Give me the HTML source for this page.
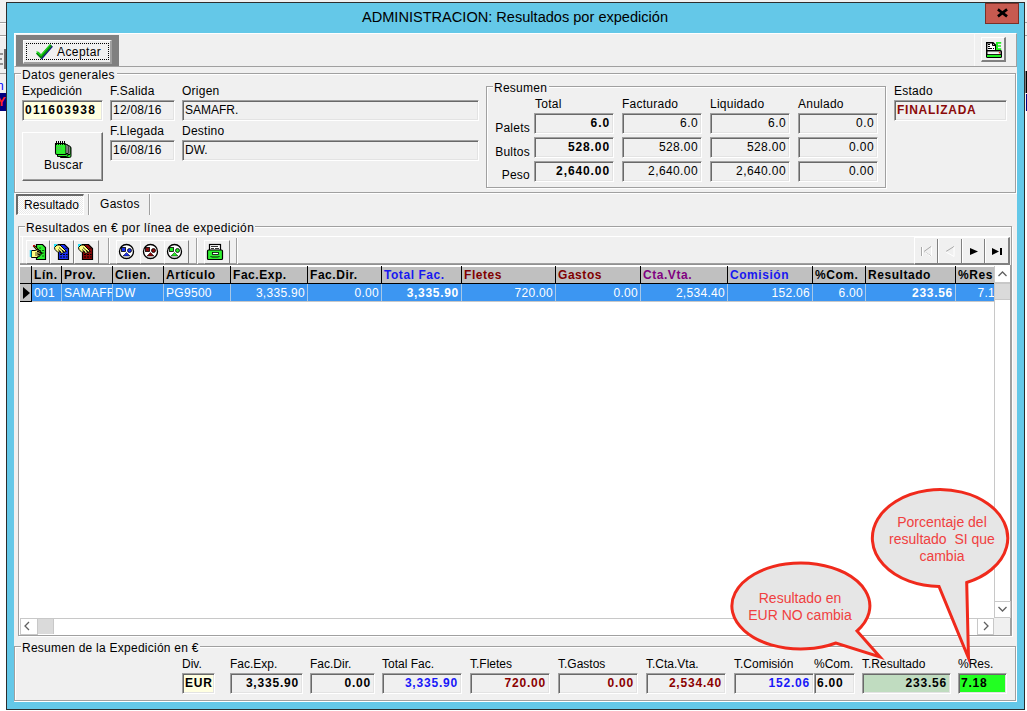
<!DOCTYPE html><html><head><meta charset="utf-8"><style>
html,body{margin:0;padding:0;}
body{width:1027px;height:711px;position:relative;overflow:hidden;background:#fff;font-family:"Liberation Sans",sans-serif;}
div{position:absolute;box-sizing:content-box;}
.t{white-space:pre;}
.sk{border-top:1px solid #a0a0a0;border-left:1px solid #a0a0a0;border-bottom:1px solid #fff;border-right:1px solid #fff;box-shadow:inset 1px 1px 0 #696969, inset -1px -1px 0 #e3e3e3;}
.rs{border-top:1px solid #fff;border-left:1px solid #fff;border-bottom:1px solid #696969;border-right:1px solid #696969;box-shadow:inset -1px -1px 0 #a0a0a0, inset 1px 1px 0 #f0f0f0;}
.tb{border-top:1px solid #fff;border-left:1px solid #fff;border-bottom:1px solid #a0a0a0;border-right:1px solid #a0a0a0;}
svg{position:absolute;}
</style></head><body>
<div style="left:0px;top:0px;width:1027px;height:2px;background:#f0f0f0"></div>
<div style="left:0px;top:0px;width:6px;height:111px;background:#f0f0f0"></div>
<div style="left:1025px;top:0px;width:2px;height:111px;background:#f0f0f0"></div>
<div style="left:0px;top:22px;width:6px;height:1px;background:#a0a0a0"></div>
<div style="left:0px;top:23px;width:6px;height:1px;background:#fff"></div>
<div style="left:0px;top:35px;width:6px;height:1px;background:#a0a0a0"></div>
<div style="left:0px;top:36px;width:6px;height:1px;background:#fff"></div>
<div style="left:0px;top:49px;width:4px;height:20px;background:#ececec;border-right:2px solid #6a6a6a"></div>
<div style="left:0px;top:53px;width:3px;height:2px;background:#909090"></div>
<div style="left:0px;top:58px;width:2px;height:2px;background:#909090"></div>
<div style="left:0px;top:63px;width:3px;height:2px;background:#909090"></div>
<div style="left:0px;top:73px;width:6px;height:1px;background:#a0a0a0"></div>
<div class="t" style="left:-3px;top:79px;font-size:12px;color:#0000ff">n</div>
<div style="left:0px;top:93px;width:6px;height:18px;background:#000080"></div>
<div class="t" style="left:-3px;top:94px;font-size:13px;font-weight:700;color:#ff2020">Y</div>
<div style="left:1025px;top:22px;width:2px;height:1px;background:#a0a0a0"></div>
<div style="left:1025px;top:35px;width:2px;height:1px;background:#a0a0a0"></div>
<div style="left:1025px;top:71px;width:1px;height:22px;background:#808080"></div>
<div style="left:1026px;top:71px;width:1px;height:22px;background:#000"></div>
<div style="left:1026px;top:94px;width:1px;height:17px;background:#000080"></div>
<div style="left:6px;top:2px;width:1017px;height:706px;border:1px solid #2d2d2d;background:#64c8e8"></div>
<div class="t" style="left:0;width:1030px;text-align:center;top:8px;font-size:15.5px;line-height:18px;color:#000;transform:scaleX(0.94);transform-origin:515px 0">ADMINISTRACION: Resultados por expedición</div>
<div style="left:985px;top:3px;width:32px;height:19px;background:#c75a50;border:1px solid #7a3028"></div>
<svg style="left:0;top:0" width="1027" height="30" viewBox="0 0 1027 30"><path d="M999 10.2 L1006 15.6 M1006 10.2 L999 15.6" stroke="#000" stroke-width="2.7" stroke-linecap="square"/></svg>
<div style="left:14px;top:33px;width:1003px;height:669px;background:#f0f0f0"></div>
<div style="left:14px;top:33px;width:1002px;height:33px;border-top:1px solid #fff;border-left:1px solid #fff;border-right:1px solid #a0a0a0;border-bottom:1px solid #a0a0a0;width:1001px;height:32px"></div>
<div style="left:16px;top:35px;width:103px;height:31px;background:#808080"></div>
<div style="left:23px;top:40px;width:86px;height:21px;background:#f0f0f0;border-top:1px solid #fff;border-left:1px solid #fff;border-bottom:2px solid #a0a0a0;border-right:2px solid #a0a0a0"></div>
<div style="left:26px;top:43px;width:81px;height:15px;border:1px dotted #000"></div>
<svg style="left:0;top:0" width="1027" height="711" viewBox="0 0 1027 711"><path d="M37.8 53.2 L41.8 57.2 L51.8 45.8" fill="none" stroke="#0a0a90" stroke-width="3"/><path d="M37 52.5 L41 56.5 L51 45.2" fill="none" stroke="#0c8a0c" stroke-width="3"/><path d="M36.6 51.5 L41 55.3 L50.3 44.5" fill="none" stroke="#22ee22" stroke-width="1.1"/></svg>
<div class="t" style="left:57px;top:45px;font-size:12px;line-height:14px;color:#000;font-weight:400;letter-spacing:0.4px;">Aceptar</div>
<div style="left:974px;top:34px;width:1px;height:32px;background:#fafafa"></div>
<div style="left:981px;top:37px;width:22px;height:22px;background:#f0f0f0;border-top:1px solid #fff;border-left:1px solid #fff;border-bottom:2px solid #808080;border-right:2px solid #808080"></div>
<div style="left:15px;top:74px;width:1000px;height:118px;border:1px solid #fff"></div>
<div style="left:14px;top:73px;width:1000px;height:118px;border:1px solid #a0a0a0"></div>
<div style="left:21px;top:71px;width:96px;height:6px;background:#f0f0f0"></div>
<div class="t" style="left:22px;top:68px;font-size:12px;line-height:14px;color:#000;font-weight:400;letter-spacing:0.37px;">Datos generales</div>
<div class="t" style="left:22px;top:84px;font-size:12px;line-height:14px;color:#000;font-weight:400;letter-spacing:0.13px;">Expedición</div>
<div class="t" style="left:110px;top:84px;font-size:12px;line-height:14px;color:#000;font-weight:400;letter-spacing:0.25px;">F.Salida</div>
<div class="t" style="left:182px;top:84px;font-size:12px;line-height:14px;color:#000;font-weight:400;letter-spacing:0.25px;">Origen</div>
<div class="t" style="left:110px;top:124px;font-size:12px;line-height:14px;color:#000;font-weight:400;letter-spacing:0.25px;">F.Llegada</div>
<div class="t" style="left:182px;top:124px;font-size:12px;line-height:14px;color:#000;font-weight:400;letter-spacing:0.25px;">Destino</div>
<div class="sk" style="left:22px;top:100px;width:79px;height:19px;background:#ffffe1"></div>
<div class="t" style="left:25px;top:103px;font-size:12px;line-height:14px;color:#000;font-weight:700;letter-spacing:1.3px;">011603938</div>
<div class="sk" style="left:110px;top:100px;width:63px;height:19px;background:#f0f0f0"></div>
<div class="t" style="left:113px;top:103px;font-size:12px;line-height:14px;color:#000;font-weight:400;letter-spacing:0.25px;">12/08/16</div>
<div class="sk" style="left:182px;top:100px;width:295px;height:19px;background:#f0f0f0"></div>
<div class="t" style="left:185px;top:103px;font-size:12px;line-height:14px;color:#000;font-weight:400;letter-spacing:0px;">SAMAFR.</div>
<div class="sk" style="left:110px;top:140px;width:63px;height:19px;background:#f0f0f0"></div>
<div class="t" style="left:113px;top:143px;font-size:12px;line-height:14px;color:#000;font-weight:400;letter-spacing:0.25px;">16/08/16</div>
<div class="sk" style="left:182px;top:140px;width:295px;height:19px;background:#f0f0f0"></div>
<div class="t" style="left:185px;top:143px;font-size:12px;line-height:14px;color:#000;font-weight:400;letter-spacing:0px;">DW.</div>
<div class="rs" style="left:22px;top:132px;width:79px;height:47px;background:#f0f0f0"></div>
<div class="t" style="left:44px;top:158px;font-size:12px;line-height:14px;color:#000;font-weight:400;letter-spacing:0.3px;">Buscar</div>
<div style="left:487px;top:87px;width:398px;height:100px;border:1px solid #fff"></div>
<div style="left:486px;top:86px;width:398px;height:100px;border:1px solid #a0a0a0"></div>
<div style="left:493px;top:84px;width:56px;height:6px;background:#f0f0f0"></div>
<div class="t" style="left:494px;top:81px;font-size:12px;line-height:14px;color:#000;font-weight:400;letter-spacing:0.25px;">Resumen</div>
<div class="t" style="left:535px;top:97px;font-size:12px;line-height:14px;color:#000;font-weight:400;letter-spacing:0.25px;">Total</div>
<div class="t" style="left:622px;top:97px;font-size:12px;line-height:14px;color:#000;font-weight:400;letter-spacing:0.25px;">Facturado</div>
<div class="t" style="left:710px;top:97px;font-size:12px;line-height:14px;color:#000;font-weight:400;letter-spacing:0.25px;">Liquidado</div>
<div class="t" style="left:798px;top:97px;font-size:12px;line-height:14px;color:#000;font-weight:400;letter-spacing:0.25px;">Anulado</div>
<div class="t" style="left:230px;width:300px;text-align:right;top:121px;font-size:12px;line-height:14px;color:#000;font-weight:400;letter-spacing:0.25px;">Palets</div>
<div class="t" style="left:230px;width:300px;text-align:right;top:145px;font-size:12px;line-height:14px;color:#000;font-weight:400;letter-spacing:0.25px;">Bultos</div>
<div class="t" style="left:230px;width:300px;text-align:right;top:168px;font-size:12px;line-height:14px;color:#000;font-weight:400;letter-spacing:0.25px;">Peso</div>
<div class="sk" style="left:534px;top:113px;width:78px;height:19px;background:#f0f0f0"></div>
<div class="t" style="left:310px;width:300px;text-align:right;top:116px;font-size:12px;line-height:14px;color:#000;font-weight:700;letter-spacing:0.9px;">6.0</div>
<div class="sk" style="left:622px;top:113px;width:78px;height:19px;background:#f0f0f0"></div>
<div class="t" style="left:398px;width:300px;text-align:right;top:116px;font-size:12px;line-height:14px;color:#000;font-weight:400;letter-spacing:0.4px;">6.0</div>
<div class="sk" style="left:710px;top:113px;width:78px;height:19px;background:#f0f0f0"></div>
<div class="t" style="left:486px;width:300px;text-align:right;top:116px;font-size:12px;line-height:14px;color:#000;font-weight:400;letter-spacing:0.4px;">6.0</div>
<div class="sk" style="left:798px;top:113px;width:78px;height:19px;background:#f0f0f0"></div>
<div class="t" style="left:574px;width:300px;text-align:right;top:116px;font-size:12px;line-height:14px;color:#000;font-weight:400;letter-spacing:0.4px;">0.0</div>
<div class="sk" style="left:534px;top:137px;width:78px;height:19px;background:#f0f0f0"></div>
<div class="t" style="left:310px;width:300px;text-align:right;top:140px;font-size:12px;line-height:14px;color:#000;font-weight:700;letter-spacing:0.9px;">528.00</div>
<div class="sk" style="left:622px;top:137px;width:78px;height:19px;background:#f0f0f0"></div>
<div class="t" style="left:398px;width:300px;text-align:right;top:140px;font-size:12px;line-height:14px;color:#000;font-weight:400;letter-spacing:0.4px;">528.00</div>
<div class="sk" style="left:710px;top:137px;width:78px;height:19px;background:#f0f0f0"></div>
<div class="t" style="left:486px;width:300px;text-align:right;top:140px;font-size:12px;line-height:14px;color:#000;font-weight:400;letter-spacing:0.4px;">528.00</div>
<div class="sk" style="left:798px;top:137px;width:78px;height:19px;background:#f0f0f0"></div>
<div class="t" style="left:574px;width:300px;text-align:right;top:140px;font-size:12px;line-height:14px;color:#000;font-weight:400;letter-spacing:0.4px;">0.00</div>
<div class="sk" style="left:534px;top:161px;width:78px;height:19px;background:#f0f0f0"></div>
<div class="t" style="left:310px;width:300px;text-align:right;top:164px;font-size:12px;line-height:14px;color:#000;font-weight:700;letter-spacing:0.9px;">2,640.00</div>
<div class="sk" style="left:622px;top:161px;width:78px;height:19px;background:#f0f0f0"></div>
<div class="t" style="left:398px;width:300px;text-align:right;top:164px;font-size:12px;line-height:14px;color:#000;font-weight:400;letter-spacing:0.4px;">2,640.00</div>
<div class="sk" style="left:710px;top:161px;width:78px;height:19px;background:#f0f0f0"></div>
<div class="t" style="left:486px;width:300px;text-align:right;top:164px;font-size:12px;line-height:14px;color:#000;font-weight:400;letter-spacing:0.4px;">2,640.00</div>
<div class="sk" style="left:798px;top:161px;width:78px;height:19px;background:#f0f0f0"></div>
<div class="t" style="left:574px;width:300px;text-align:right;top:164px;font-size:12px;line-height:14px;color:#000;font-weight:400;letter-spacing:0.4px;">0.00</div>
<div class="t" style="left:894px;top:84px;font-size:12px;line-height:14px;color:#000;font-weight:400;letter-spacing:0.25px;">Estado</div>
<div class="sk" style="left:894px;top:100px;width:111px;height:19px;background:#f0f0f0"></div>
<div class="t" style="left:897px;top:103px;font-size:12px;line-height:14px;color:#8b0a0a;font-weight:700;letter-spacing:0.75px;">FINALIZADA</div>
<div style="left:16px;top:194px;width:65px;height:18px;border-top:2px solid #696969;border-left:2px solid #696969;border-bottom:1px solid #fff;border-right:1px solid #fff;background-color:#f4f4f4;background-image:repeating-conic-gradient(#ffffff 0 25%, #e8e8e8 0 50%);background-size:2px 2px"></div>
<div class="t" style="left:24px;top:198px;font-size:12px;line-height:14px;color:#000;font-weight:400;letter-spacing:0.1px;">Resultado</div>
<div style="left:88px;top:194px;width:1px;height:21px;background:#a0a0a0;border-right:1px solid #fff"></div>
<div class="t" style="left:100px;top:197px;font-size:12px;line-height:14px;color:#000;font-weight:400;letter-spacing:0.3px;">Gastos</div>
<div style="left:149px;top:194px;width:1px;height:21px;background:#a0a0a0;border-right:1px solid #fff"></div>
<div style="left:19px;top:227px;width:992px;height:408px;border:1px solid #fff"></div>
<div style="left:18px;top:226px;width:992px;height:408px;border:1px solid #a0a0a0"></div>
<div style="left:25px;top:224px;width:230px;height:6px;background:#f0f0f0"></div>
<div class="t" style="left:26px;top:221px;font-size:12px;line-height:14px;color:#000;font-weight:400;letter-spacing:0.36px;">Resultados en € por línea de expedición</div>
<div style="left:20px;top:236px;width:990px;height:1px;background:#fff"></div>
<div style="left:22px;top:237px;width:1px;height:26px;background:#fff"></div>
<div style="left:20px;top:263px;width:990px;height:1px;background:#a0a0a0"></div>
<div style="left:20px;top:264px;width:990px;height:1px;background:#909090"></div>
<div style="left:26px;top:240px;width:22px;height:22px;background:#f0f0f0;border-top:1px solid #fff;border-left:1px solid #fff;border-bottom:1px solid #808080;border-right:1px solid #808080"></div>
<div style="left:50px;top:240px;width:22px;height:22px;background:#f0f0f0;border-top:1px solid #fff;border-left:1px solid #fff;border-bottom:1px solid #808080;border-right:1px solid #808080"></div>
<div style="left:74px;top:240px;width:23px;height:22px;background:#f0f0f0;border-top:1px solid #fff;border-left:1px solid #fff;border-bottom:1px solid #808080;border-right:1px solid #808080"></div>
<div style="left:116px;top:240px;width:23px;height:22px;background:#f0f0f0;border-top:1px solid #fff;border-left:1px solid #fff;border-bottom:1px solid #808080;border-right:1px solid #808080"></div>
<div style="left:140px;top:240px;width:23px;height:22px;background:#f0f0f0;border-top:1px solid #fff;border-left:1px solid #fff;border-bottom:1px solid #808080;border-right:1px solid #808080"></div>
<div style="left:164px;top:240px;width:23px;height:22px;background:#f0f0f0;border-top:1px solid #fff;border-left:1px solid #fff;border-bottom:1px solid #808080;border-right:1px solid #808080"></div>
<div style="left:204px;top:240px;width:24px;height:22px;background:#f0f0f0;border-top:1px solid #fff;border-left:1px solid #fff;border-bottom:1px solid #808080;border-right:1px solid #808080"></div>
<div style="left:108px;top:238px;width:1px;height:26px;background:#a0a0a0;border-right:1px solid #fff"></div>
<div style="left:196px;top:238px;width:1px;height:26px;background:#a0a0a0;border-right:1px solid #fff"></div>
<div style="left:236px;top:238px;width:1px;height:26px;background:#a0a0a0;border-right:1px solid #fff"></div>
<div style="left:914px;top:237px;width:93px;height:25px;background:#f0f0f0;border-top:1px solid #fff;border-left:1px solid #fff;border-bottom:2px solid #808080;border-right:2px solid #808080"></div>
<div style="left:937px;top:239px;width:1px;height:24px;background:#808080;border-right:1px solid #fff"></div>
<div style="left:961px;top:239px;width:1px;height:24px;background:#808080;border-right:1px solid #fff"></div>
<div style="left:984px;top:239px;width:1px;height:24px;background:#808080;border-right:1px solid #fff"></div>
<svg style="left:0;top:0" width="1027" height="711" viewBox="0 0 1027 711">
<path d="M921.5 247v9" stroke="#a8a8a8" stroke-width="1"/><path d="M922.5 247v9" stroke="#fff" stroke-width="1"/>
<path d="M931 246.5 L924 251.5 L931 256" fill="none" stroke="#a8a8a8" stroke-width="1"/><path d="M931.5 247 v9" stroke="#fff" stroke-width="1"/><path d="M924.5 252 L931 256.5" stroke="#fff" stroke-width="1"/>
<path d="M954 246.5 L946 251.5" fill="none" stroke="#a8a8a8" stroke-width="1"/><path d="M946 252 L954 256.5 V247" fill="none" stroke="#fff" stroke-width="1"/>
<path d="M970 248 L978 251.5 L970 255 Z" fill="#000"/>
<path d="M992 248 L999 251.5 L992 255 Z" fill="#000"/><rect x="1000" y="248" width="2" height="7" fill="#000"/>
</svg>
<svg style="left:0;top:0" width="1027" height="711" viewBox="0 0 1027 711">
<!-- icon1: hand with pencil over green doc -->
<path d="M36.5 244.5h6l3 3v12h-9z" fill="#2ef02e" stroke="#000" stroke-width="1.2"/>
<path d="M39 248h2M38 250.5h3M42 250.5h2M38 253h2M42 253h2M38 256h2M42 256h2" stroke="#0b5a0b" stroke-width="1"/>
<path d="M33.5 245.5 L42 254" stroke="#000" stroke-width="2.2"/>
<path d="M33.5 245.5 L42 254" stroke="#f0e000" stroke-width="1" stroke-dasharray="1 1"/>
<rect x="33" y="245" width="1.6" height="1.6" fill="#e00000"/>
<path d="M31.5 250.5h3.5l1.5 -0.5h2.5v1.5h-2l4 1.2v1.3h-3.5l2.5 0.8v1.2h-2.5l0.5 0.5v1h-6.5z" fill="#ffff80" stroke="#000" stroke-width="1"/><path d="M35 253h3M35 255h2.5" stroke="#000" stroke-width="0.7"/>
<rect x="29.8" y="250" width="1.6" height="7" fill="#20d8f8"/>
<!-- icon2/3 -->
<path d="M58.5 244.5h6l4 4v11h-10z" fill="#1a30f0" stroke="#000" stroke-width="1.2"/>
<path d="M66 248v1M66 251v1M60 254.5h2M63 254.5h2M66 254.5h1.5M60 257h2M63 257h2M66 257h1.5" stroke="#000" stroke-width="1"/>
<path d="M54 244h3.6l-3.6 3.6z" fill="#20e0f8"/>
<path d="M54.5 247.5 L57 245 H60 L66 251 L65 252.5 L62.5 250.5 L63.5 252.5 L62 253.5 L59.5 251.5 L58 252.5 L55 249.5 Z" fill="#ffff80" stroke="#000" stroke-width="1"/><path d="M59 247.5 L63 251.2M58 249.5 L61 252" stroke="#000" stroke-width="0.8"/>
<path d="M82.5 244.5h6l4 4v11h-10z" fill="#8a0808" stroke="#000" stroke-width="1.2"/>
<path d="M90 248v1M90 251v1M84 254.5h2M87 254.5h2M90 254.5h1.5M84 257h2M87 257h2M90 257h1.5" stroke="#000" stroke-width="1"/>
<path d="M78 244h3.6l-3.6 3.6z" fill="#20e0f8"/>
<path d="M78.5 247.5 L81 245 H84 L90 251 L89 252.5 L86.5 250.5 L87.5 252.5 L86 253.5 L83.5 251.5 L82 252.5 L79 249.5 Z" fill="#ffff80" stroke="#000" stroke-width="1"/><path d="M83 247.5 L87 251.2M82 249.5 L85 252" stroke="#000" stroke-width="0.8"/>
<!-- circle icons -->
<g id="ci1"><circle cx="126.5" cy="251.5" r="7" fill="#fff" stroke="#000" stroke-width="1.3"/>
<rect x="121.5" y="247.5" width="4" height="4" fill="#1a30f0" stroke="#000" stroke-width="0.8"/>
<circle cx="129.5" cy="250.5" r="2" fill="#1a30f0" stroke="#000" stroke-width="0.8"/>
<path d="M126.5 252.5 L130 256 H123 Z" fill="#1a30f0" stroke="#000" stroke-width="0.5"/></g>
<circle cx="150.5" cy="251.5" r="7" fill="#fff" stroke="#000" stroke-width="1.3"/>
<rect x="145.5" y="247.5" width="4" height="4" fill="#8a0808" stroke="#000" stroke-width="0.8"/>
<circle cx="153.5" cy="250.5" r="2" fill="#8a0808" stroke="#000" stroke-width="0.8"/>
<path d="M150.5 252.5 L154 256 H147 Z" fill="#8a0808" stroke="#000" stroke-width="0.5"/>
<circle cx="174.5" cy="251.5" r="7" fill="#fff" stroke="#000" stroke-width="1.3"/>
<rect x="169.5" y="247.5" width="4" height="4" fill="#22ee22" stroke="#000" stroke-width="0.8"/>
<circle cx="177.5" cy="250.5" r="2" fill="#22ee22" stroke="#000" stroke-width="0.8"/>
<path d="M174.5 252.5 L178 256 H171 Z" fill="#22ee22" stroke="#000" stroke-width="0.5"/>
<!-- cabinet -->
<rect x="209.5" y="244.5" width="11" height="6" fill="#fff" stroke="#000" stroke-width="1.2"/>
<path d="M211 246.5h7M211 248.5h3M215 248.5h4" stroke="#000" stroke-width="0.8"/>
<rect x="207.5" y="250" width="15" height="9.5" rx="1" fill="#2ef02e" stroke="#000" stroke-width="1.2"/>
<rect x="212.5" y="252.5" width="6" height="2" fill="#fff" stroke="#000" stroke-width="0.8"/>
<path d="M210.5 256 l1 1 h7 l1 -1" fill="none" stroke="#000" stroke-width="0.9"/>
<!-- excel button icon -->
<path d="M986.7 42.7h6.3l2.7 2.7v5.6h-9z" fill="#fff" stroke="#000" stroke-width="1.4"/>
<rect x="988" y="44" width="2" height="1" fill="#000"/><rect x="988" y="46" width="2" height="1" fill="#000"/><rect x="988" y="48" width="4" height="1" fill="#000"/><rect x="993" y="48" width="1" height="1" fill="#000"/><path d="M992.5 43v2.5h2.5" fill="none" stroke="#000" stroke-width="1"/>
<path d="M996 42h5.2v1.8h-3.2v1.4h3v1.6h-3v1.4h3.2v1.8h-5.2z" fill="#22ee22"/>
<rect x="986" y="50" width="16" height="8" rx="1.5" fill="#000"/>
<rect x="987.5" y="51.5" width="13" height="2.6" fill="#fff"/>
<path d="M988.5 52.8h11" stroke="#c0c0c0" stroke-width="0.8" stroke-dasharray="1 1"/>
<circle cx="999.5" cy="52.8" r="0.8" fill="#f00"/>
<rect x="987" y="55" width="14" height="2" fill="#22ee22"/>
<!-- buscar notebook -->
<path d="M60.5 146.5h9a1.5 1.5 0 0 1 1.5 1.5v8a1.5 1.5 0 0 1 -1.5 1.5h-9z" fill="#2ef02e" stroke="#000" stroke-width="1"/>
<path d="M60.5 145.5h8a1.5 1.5 0 0 1 1.5 1.5v7.5h-9.5z" fill="#fff" stroke="#000" stroke-width="1"/>
<path d="M57.5 144.5h9a1.5 1.5 0 0 1 1.5 1.5v9a1.5 1.5 0 0 1 -1.5 1.5h-9z" fill="#2ef02e" stroke="#000" stroke-width="1"/>
<path d="M57.5 144.5h9a1.5 1.5 0 0 1 1.5 1.5v7.5h-10.5z" fill="#fff" stroke="#000" stroke-width="1"/>
<path d="M55.5 143.5h9a1.5 1.5 0 0 1 1.5 1.5v9.5h-9a1.5 1.5 0 0 1 -1.5 -1.5z" fill="#2ef02e" stroke="#000" stroke-width="1.1"/>
<rect x="56" y="141" width="1" height="4" fill="#000"/><rect x="58" y="141" width="1" height="4" fill="#000"/><rect x="60" y="141" width="1" height="4" fill="#000"/><rect x="62" y="141" width="1" height="4" fill="#000"/><rect x="64" y="141" width="1" height="4" fill="#000"/>
<path d="M57 147.5h5M57 149.5h5" stroke="#808080" stroke-width="0.8" stroke-dasharray="1 0.6"/>
</svg>
<div style="left:19px;top:265px;width:991px;height:370px;background:#fff;border-right:1px solid #a0a0a0;border-bottom:1px solid #a0a0a0;width:991px;height:370px"></div>
<div style="left:20px;top:266px;width:974px;height:17px;background:#c0c0c0;border-top:1px solid #fff;height:16px"></div>
<div style="left:20px;top:283px;width:974px;height:1px;background:#000"></div>
<div style="left:31px;top:266px;width:1px;height:17px;background:#000"></div>
<div style="left:61px;top:266px;width:1px;height:17px;background:#000"></div>
<div style="left:112px;top:266px;width:1px;height:17px;background:#000"></div>
<div style="left:163px;top:266px;width:1px;height:17px;background:#000"></div>
<div style="left:230px;top:266px;width:1px;height:17px;background:#000"></div>
<div style="left:307px;top:266px;width:1px;height:17px;background:#000"></div>
<div style="left:381px;top:266px;width:1px;height:17px;background:#000"></div>
<div style="left:461px;top:266px;width:1px;height:17px;background:#000"></div>
<div style="left:555px;top:266px;width:1px;height:17px;background:#000"></div>
<div style="left:640px;top:266px;width:1px;height:17px;background:#000"></div>
<div style="left:727px;top:266px;width:1px;height:17px;background:#000"></div>
<div style="left:812px;top:266px;width:1px;height:17px;background:#000"></div>
<div style="left:865px;top:266px;width:1px;height:17px;background:#000"></div>
<div style="left:955px;top:266px;width:1px;height:17px;background:#000"></div>
<div style="left:20px;top:284px;width:11px;height:17px;background:#c0c0c0"></div>
<div style="left:20px;top:301px;width:12px;height:1px;background:#000"></div>
<div style="left:31px;top:284px;width:1px;height:17px;background:#000"></div>
<svg style="left:22px;top:286px" width="9" height="14" viewBox="0 0 9 14"><path d="M1 1 L8 7 L1 13 Z" fill="#000"/></svg>
<div style="left:32px;top:284px;width:962px;height:17px;background:#3c96f2"></div>
<div style="left:61px;top:284px;width:1px;height:17px;background:#a8c8e8"></div>
<div style="left:112px;top:284px;width:1px;height:17px;background:#a8c8e8"></div>
<div style="left:163px;top:284px;width:1px;height:17px;background:#a8c8e8"></div>
<div style="left:230px;top:284px;width:1px;height:17px;background:#a8c8e8"></div>
<div style="left:307px;top:284px;width:1px;height:17px;background:#a8c8e8"></div>
<div style="left:381px;top:284px;width:1px;height:17px;background:#a8c8e8"></div>
<div style="left:461px;top:284px;width:1px;height:17px;background:#a8c8e8"></div>
<div style="left:555px;top:284px;width:1px;height:17px;background:#a8c8e8"></div>
<div style="left:640px;top:284px;width:1px;height:17px;background:#a8c8e8"></div>
<div style="left:727px;top:284px;width:1px;height:17px;background:#a8c8e8"></div>
<div style="left:812px;top:284px;width:1px;height:17px;background:#a8c8e8"></div>
<div style="left:865px;top:284px;width:1px;height:17px;background:#a8c8e8"></div>
<div style="left:955px;top:284px;width:1px;height:17px;background:#a8c8e8"></div>
<div style="left:32px;top:301px;width:962px;height:1px;background:#c8c8c8"></div>
<div style="left:20px;top:266px;width:974px;height:17px;overflow:hidden">
<div style="left:12px;top:0;width:29px;height:17px;overflow:hidden"><div class="t" style="left:2px;top:2px;font-size:12px;line-height:14px;font-weight:700;letter-spacing:0.55px;color:#000">Lín.</div></div>
<div style="left:42px;top:0;width:50px;height:17px;overflow:hidden"><div class="t" style="left:2px;top:2px;font-size:12px;line-height:14px;font-weight:700;letter-spacing:0.55px;color:#000">Prov.</div></div>
<div style="left:93px;top:0;width:50px;height:17px;overflow:hidden"><div class="t" style="left:2px;top:2px;font-size:12px;line-height:14px;font-weight:700;letter-spacing:0.55px;color:#000">Clien.</div></div>
<div style="left:144px;top:0;width:66px;height:17px;overflow:hidden"><div class="t" style="left:2px;top:2px;font-size:12px;line-height:14px;font-weight:700;letter-spacing:0.55px;color:#000">Artículo</div></div>
<div style="left:211px;top:0;width:76px;height:17px;overflow:hidden"><div class="t" style="left:2px;top:2px;font-size:12px;line-height:14px;font-weight:700;letter-spacing:0.55px;color:#000">Fac.Exp.</div></div>
<div style="left:288px;top:0;width:73px;height:17px;overflow:hidden"><div class="t" style="left:2px;top:2px;font-size:12px;line-height:14px;font-weight:700;letter-spacing:0.55px;color:#000">Fac.Dir.</div></div>
<div style="left:362px;top:0;width:79px;height:17px;overflow:hidden"><div class="t" style="left:2px;top:2px;font-size:12px;line-height:14px;font-weight:700;letter-spacing:0.55px;color:#1818f0">Total Fac.</div></div>
<div style="left:442px;top:0;width:93px;height:17px;overflow:hidden"><div class="t" style="left:2px;top:2px;font-size:12px;line-height:14px;font-weight:700;letter-spacing:0.55px;color:#800000">Fletes</div></div>
<div style="left:536px;top:0;width:84px;height:17px;overflow:hidden"><div class="t" style="left:2px;top:2px;font-size:12px;line-height:14px;font-weight:700;letter-spacing:0.55px;color:#800000">Gastos</div></div>
<div style="left:621px;top:0;width:86px;height:17px;overflow:hidden"><div class="t" style="left:2px;top:2px;font-size:12px;line-height:14px;font-weight:700;letter-spacing:0.55px;color:#800080">Cta.Vta.</div></div>
<div style="left:708px;top:0;width:84px;height:17px;overflow:hidden"><div class="t" style="left:2px;top:2px;font-size:12px;line-height:14px;font-weight:700;letter-spacing:0.55px;color:#1818f0">Comisión</div></div>
<div style="left:793px;top:0;width:52px;height:17px;overflow:hidden"><div class="t" style="left:2px;top:2px;font-size:12px;line-height:14px;font-weight:700;letter-spacing:0.55px;color:#000">%Com.</div></div>
<div style="left:846px;top:0;width:89px;height:17px;overflow:hidden"><div class="t" style="left:2px;top:2px;font-size:12px;line-height:14px;font-weight:700;letter-spacing:0.55px;color:#000">Resultado</div></div>
<div style="left:936px;top:0;width:38px;height:17px;overflow:hidden"><div class="t" style="left:2px;top:2px;font-size:12px;line-height:14px;font-weight:700;letter-spacing:0.55px;color:#000">%Res</div></div>
</div>
<div style="left:20px;top:284px;width:974px;height:17px;overflow:hidden">
<div style="left:12px;top:0;width:29px;height:17px;overflow:hidden"><div class="t" style="left:2px;top:2px;font-size:12px;line-height:14px;color:#fff;letter-spacing:0.3px">001</div></div>
<div style="left:42px;top:0;width:50px;height:17px;overflow:hidden"><div class="t" style="left:2px;top:2px;font-size:12px;line-height:14px;color:#fff;letter-spacing:0.3px">SAMAFR</div></div>
<div style="left:93px;top:0;width:50px;height:17px;overflow:hidden"><div class="t" style="left:2px;top:2px;font-size:12px;line-height:14px;color:#fff;letter-spacing:0.3px">DW</div></div>
<div style="left:144px;top:0;width:66px;height:17px;overflow:hidden"><div class="t" style="left:2px;top:2px;font-size:12px;line-height:14px;color:#fff;letter-spacing:0.3px">PG9500</div></div>
<div style="left:211px;top:0;width:76px;height:17px;overflow:hidden"><div class="t" style="right:2px;top:2px;font-size:12px;line-height:14px;color:#fff;font-weight:400;letter-spacing:0.3px">3,335.90</div></div>
<div style="left:288px;top:0;width:73px;height:17px;overflow:hidden"><div class="t" style="right:2px;top:2px;font-size:12px;line-height:14px;color:#fff;font-weight:400;letter-spacing:0.3px">0.00</div></div>
<div style="left:362px;top:0;width:79px;height:17px;overflow:hidden"><div class="t" style="right:2px;top:2px;font-size:12px;line-height:14px;color:#fff;font-weight:700;letter-spacing:0.7px">3,335.90</div></div>
<div style="left:442px;top:0;width:93px;height:17px;overflow:hidden"><div class="t" style="right:2px;top:2px;font-size:12px;line-height:14px;color:#fff;font-weight:400;letter-spacing:0.3px">720.00</div></div>
<div style="left:536px;top:0;width:84px;height:17px;overflow:hidden"><div class="t" style="right:2px;top:2px;font-size:12px;line-height:14px;color:#fff;font-weight:400;letter-spacing:0.3px">0.00</div></div>
<div style="left:621px;top:0;width:86px;height:17px;overflow:hidden"><div class="t" style="right:2px;top:2px;font-size:12px;line-height:14px;color:#fff;font-weight:400;letter-spacing:0.3px">2,534.40</div></div>
<div style="left:708px;top:0;width:84px;height:17px;overflow:hidden"><div class="t" style="right:2px;top:2px;font-size:12px;line-height:14px;color:#fff;font-weight:400;letter-spacing:0.3px">152.06</div></div>
<div style="left:793px;top:0;width:52px;height:17px;overflow:hidden"><div class="t" style="right:2px;top:2px;font-size:12px;line-height:14px;color:#fff;font-weight:400;letter-spacing:0.3px">6.00</div></div>
<div style="left:846px;top:0;width:89px;height:17px;overflow:hidden"><div class="t" style="right:2px;top:2px;font-size:12px;line-height:14px;color:#fff;font-weight:700;letter-spacing:0.7px">233.56</div></div>
<div style="left:936px;top:0;width:48px;height:17px;overflow:hidden"><div class="t" style="right:2px;top:2px;font-size:12px;line-height:14px;color:#fff;font-weight:400;letter-spacing:0.3px">7.18</div></div>
</div>
<div style="left:994px;top:266px;width:16px;height:352px;background:#fff"></div>
<div style="left:994px;top:266px;width:1px;height:352px;background:#c8c8c8"></div>
<div style="left:995px;top:282px;width:15px;height:1px;background:#c8c8c8"></div>
<svg style="left:996px;top:269px" width="12" height="10" viewBox="0 0 12 10"><path d="M2.5 7 L6.5 3 L10.5 7" fill="none" stroke="#606060" stroke-width="1.3"/></svg>
<div style="left:995px;top:283px;width:15px;height:17px;background:#dadada;border-top:1px solid #c8c8c8;border-bottom:1px solid #c8c8c8;height:15px"></div>
<div style="left:994px;top:601px;width:16px;height:16px;background:#fff;border:1px solid #c8c8c8;width:15px;height:15px"></div>
<svg style="left:996px;top:604px" width="12" height="10" viewBox="0 0 12 10"><path d="M2.5 3 L6.5 7 L10.5 3" fill="none" stroke="#606060" stroke-width="1.3"/></svg>
<div style="left:20px;top:618px;width:974px;height:16px;background:#fff;border-top:1px solid #c8c8c8;height:15px"></div>
<div style="left:20px;top:618px;width:16px;height:16px;background:#fff;border:1px solid #c8c8c8;width:16px;height:15px"></div>
<svg style="left:22px;top:620px" width="10" height="12" viewBox="0 0 10 12"><path d="M7 2 L3 6 L7 10" fill="none" stroke="#606060" stroke-width="1.3"/></svg>
<div style="left:37px;top:619px;width:17px;height:15px;background:#dadada;border-left:1px solid #c8c8c8;border-right:1px solid #c8c8c8;width:15px"></div>
<div style="left:977px;top:618px;width:16px;height:16px;background:#fff;border:1px solid #c8c8c8;width:15px;height:15px"></div>
<svg style="left:981px;top:620px" width="10" height="12" viewBox="0 0 10 12"><path d="M3 2 L7 6 L3 10" fill="none" stroke="#606060" stroke-width="1.3"/></svg>
<div style="left:994px;top:618px;width:16px;height:17px;background:#f0f0f0"></div>
<div style="left:15px;top:647px;width:1000px;height:53px;border:1px solid #fff"></div>
<div style="left:14px;top:646px;width:1000px;height:53px;border:1px solid #a0a0a0"></div>
<div style="left:21px;top:644px;width:179px;height:6px;background:#f0f0f0"></div>
<div class="t" style="left:22px;top:641px;font-size:12px;line-height:14px;color:#000;font-weight:400;letter-spacing:0.25px;">Resumen de la Expedición en €</div>
<div class="t" style="left:182px;top:657px;font-size:12px;line-height:14px;color:#000;font-weight:400;letter-spacing:0px;">Div.</div>
<div class="sk" style="left:182px;top:673px;width:31px;height:19px;background:#ffffe1"></div>
<div class="t" style="left:185px;top:676px;font-size:12px;line-height:14px;color:#000;font-weight:700;letter-spacing:0.8px;">EUR</div>
<div class="t" style="left:230px;top:657px;font-size:12px;line-height:14px;color:#000;font-weight:400;letter-spacing:0px;">Fac.Exp.</div>
<div class="sk" style="left:230px;top:673px;width:71px;height:19px;background:#f0f0f0"></div>
<div class="t" style="left:-1px;width:300px;text-align:right;top:676px;font-size:12px;line-height:14px;color:#000;font-weight:700;letter-spacing:0.8px;">3,335.90</div>
<div class="t" style="left:310px;top:657px;font-size:12px;line-height:14px;color:#000;font-weight:400;letter-spacing:0px;">Fac.Dir.</div>
<div class="sk" style="left:310px;top:673px;width:63px;height:19px;background:#f0f0f0"></div>
<div class="t" style="left:71px;width:300px;text-align:right;top:676px;font-size:12px;line-height:14px;color:#000;font-weight:700;letter-spacing:0.8px;">0.00</div>
<div class="t" style="left:382px;top:657px;font-size:12px;line-height:14px;color:#000;font-weight:400;letter-spacing:0px;">Total Fac.</div>
<div class="sk" style="left:382px;top:673px;width:78px;height:19px;background:#f0f0f0"></div>
<div class="t" style="left:158px;width:300px;text-align:right;top:676px;font-size:12px;line-height:14px;color:#1818f8;font-weight:700;letter-spacing:0.8px;">3,335.90</div>
<div class="t" style="left:470px;top:657px;font-size:12px;line-height:14px;color:#000;font-weight:400;letter-spacing:0px;">T.Fletes</div>
<div class="sk" style="left:470px;top:673px;width:78px;height:19px;background:#f0f0f0"></div>
<div class="t" style="left:246px;width:300px;text-align:right;top:676px;font-size:12px;line-height:14px;color:#8b0000;font-weight:700;letter-spacing:0.8px;">720.00</div>
<div class="t" style="left:558px;top:657px;font-size:12px;line-height:14px;color:#000;font-weight:400;letter-spacing:0px;">T.Gastos</div>
<div class="sk" style="left:558px;top:673px;width:78px;height:19px;background:#f0f0f0"></div>
<div class="t" style="left:334px;width:300px;text-align:right;top:676px;font-size:12px;line-height:14px;color:#8b0000;font-weight:700;letter-spacing:0.8px;">0.00</div>
<div class="t" style="left:646px;top:657px;font-size:12px;line-height:14px;color:#000;font-weight:400;letter-spacing:0px;">T.Cta.Vta.</div>
<div class="sk" style="left:646px;top:673px;width:78px;height:19px;background:#f0f0f0"></div>
<div class="t" style="left:422px;width:300px;text-align:right;top:676px;font-size:12px;line-height:14px;color:#8b0000;font-weight:700;letter-spacing:0.8px;">2,534.40</div>
<div class="t" style="left:734px;top:657px;font-size:12px;line-height:14px;color:#000;font-weight:400;letter-spacing:0px;">T.Comisión</div>
<div class="sk" style="left:734px;top:673px;width:78px;height:19px;background:#f0f0f0"></div>
<div class="t" style="left:510px;width:300px;text-align:right;top:676px;font-size:12px;line-height:14px;color:#1818f8;font-weight:700;letter-spacing:0.8px;">152.06</div>
<div class="t" style="left:814px;top:657px;font-size:12px;line-height:14px;color:#000;font-weight:400;letter-spacing:0px;">%Com.</div>
<div class="sk" style="left:814px;top:673px;width:39px;height:19px;background:#f0f0f0"></div>
<div class="t" style="left:817px;top:676px;font-size:12px;line-height:14px;color:#000;font-weight:700;letter-spacing:0.8px;">6.00</div>
<div class="t" style="left:862px;top:657px;font-size:12px;line-height:14px;color:#000;font-weight:400;letter-spacing:0px;">T.Resultado</div>
<div class="sk" style="left:862px;top:673px;width:87px;height:19px;background:#c0dcc0"></div>
<div class="t" style="left:647px;width:300px;text-align:right;top:676px;font-size:12px;line-height:14px;color:#000;font-weight:700;letter-spacing:0.8px;">233.56</div>
<div class="t" style="left:958px;top:657px;font-size:12px;line-height:14px;color:#000;font-weight:400;letter-spacing:0px;">%Res.</div>
<div class="sk" style="left:958px;top:673px;width:47px;height:19px;background:#22ff22"></div>
<div class="t" style="left:961px;top:676px;font-size:12px;line-height:14px;color:#000;font-weight:700;letter-spacing:0.8px;">7.18</div>
<svg style="left:0;top:0" width="1027" height="711" viewBox="0 0 1027 711">
<path d="M 836 643 A 69 43 0 1 1 857 631 L 880 657 Z" fill="#e6e6e6" stroke="#f02a1c" stroke-width="3" stroke-linejoin="miter" stroke-miterlimit="10"/>
<path d="M 939 586.4 A 67.7 48.4 0 1 1 966.7 582.5 L 968.5 658 Z" fill="#e6e6e6" stroke="#f02a1c" stroke-width="3" stroke-linejoin="miter" stroke-miterlimit="10"/>
</svg>
<div class="t" style="left:600px;width:400px;text-align:center;top:590px;font-size:14px;line-height:16px;color:#f04040">Resultado en</div>
<div class="t" style="left:600px;width:400px;text-align:center;top:607px;font-size:14px;line-height:16px;color:#f04040">EUR NO cambia</div>
<div class="t" style="left:742px;width:400px;text-align:center;top:514px;font-size:14px;line-height:16px;color:#f04040">Porcentaje del</div>
<div class="t" style="left:742px;width:400px;text-align:center;top:531px;font-size:14px;line-height:16px;color:#f04040">resultado  SI que</div>
<div class="t" style="left:742px;width:400px;text-align:center;top:548px;font-size:14px;line-height:16px;color:#f04040">cambia</div>
</body></html>
